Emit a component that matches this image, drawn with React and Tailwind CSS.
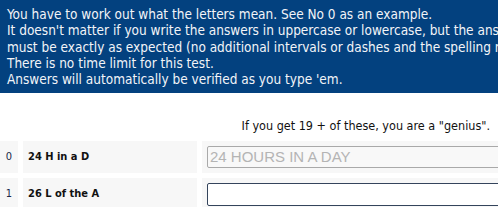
import React from 'react';

const rows = [
  { no: 0, clue: '24 H in a D', answer: '24 HOURS IN A DAY', example: true },
  { no: 1, clue: '26 L of the A', answer: '' },
];

const App = () => {
  return (
    <div className="w-[498px] h-[207px] overflow-hidden bg-white">
      <div className="w-[640px] font-['DejaVu_Sans_Condensed','DejaVu_Sans',sans-serif] text-[13.5px]">
        {/* Instructions */}
        <div className="bg-[#03417f] text-[#f2f4f8] px-[7px] pt-[6px] pb-[6px] leading-[16.25px] whitespace-nowrap">
          <div>You have to work out what the letters mean. See No 0 as an example.</div>
          <div>It doesn't matter if you write the answers in uppercase or lowercase, but the answers</div>
          <div>must be exactly as expected (no additional intervals or dashes and the spelling must be correct).</div>
          <div>There is no time limit for this test.</div>
          <div>Answers will automatically be verified as you type 'em.</div>
        </div>

        <div className="w-[498px] text-right pr-[8px] pt-[25px] h-[48px] leading-[16px] text-[12.5px] text-[#111]">
          If you get 19 + of these, you are a "genius".
        </div>

        <table className="border-separate border-spacing-[5px] -mx-[5px] -mt-[5px] text-[11px]">
          <tbody>
            {rows.map((r) => (
              <tr key={r.no} className="h-[32px]">
                <td className="w-[18px] bg-[#f7f7f7] text-center text-[#1b2a4a]">{r.no}</td>
                <td className="w-[174px] bg-[#f7f7f7] pl-[5px] font-bold text-[#111]">{r.clue}</td>
                <td className="w-[420px] bg-[#f7f7f7] px-[5px] py-0 align-middle">
                  {r.example ? (
                    <input
                      type="text"
                      disabled
                      value={r.answer}
                      readOnly
                      className="block w-[400px] h-[22px] px-[2px] border border-[#a9a9a9] rounded-[2px] bg-[#f8f8f8] text-[15px] text-[#b4b4b4] font-['Liberation_Sans',Arial,sans-serif]"
                    />
                  ) : (
                    <input
                      type="text"
                      defaultValue=""
                      className="block w-[400px] h-[23px] px-[2px] border border-[#34445c] rounded-[2px] bg-white text-[15px] font-['Liberation_Sans',Arial,sans-serif] outline-none"
                    />
                  )}
                </td>
              </tr>
            ))}
          </tbody>
        </table>
      </div>
    </div>
  );
};

export default App;
